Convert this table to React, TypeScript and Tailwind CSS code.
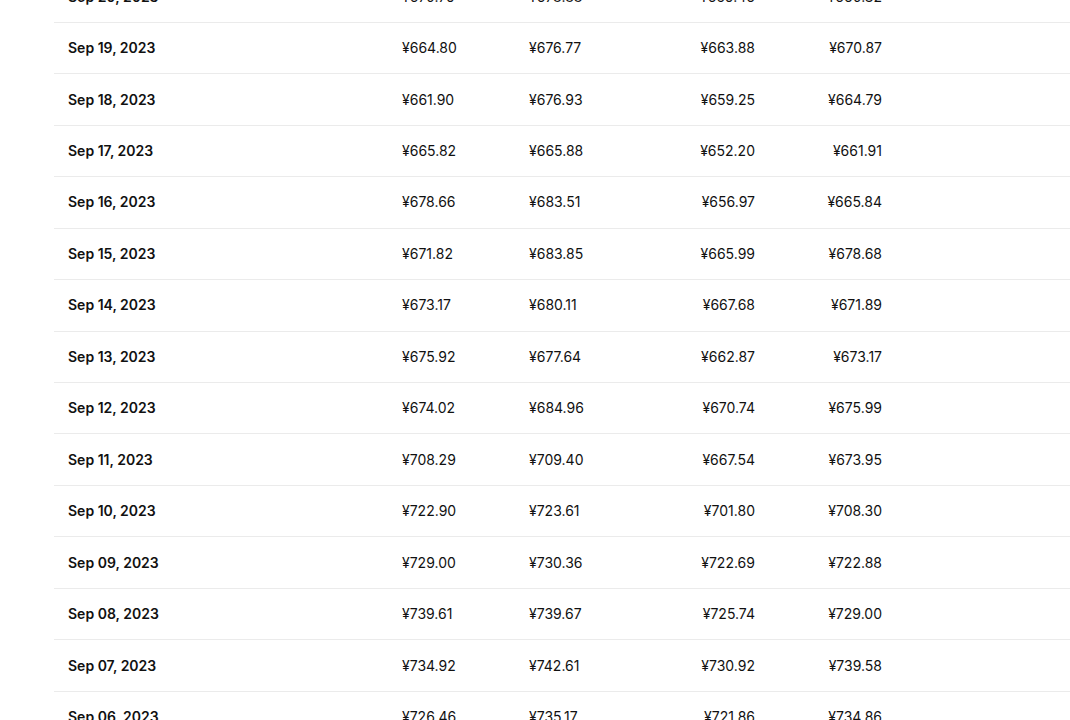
const rows = [
  ["Sep 20, 2023", "¥670.79", "¥678.88", "¥659.46", "¥660.32"],
  ["Sep 19, 2023", "¥664.80", "¥676.77", "¥663.88", "¥670.87"],
  ["Sep 18, 2023", "¥661.90", "¥676.93", "¥659.25", "¥664.79"],
  ["Sep 17, 2023", "¥665.82", "¥665.88", "¥652.20", "¥661.91"],
  ["Sep 16, 2023", "¥678.66", "¥683.51", "¥656.97", "¥665.84"],
  ["Sep 15, 2023", "¥671.82", "¥683.85", "¥665.99", "¥678.68"],
  ["Sep 14, 2023", "¥673.17", "¥680.11", "¥667.68", "¥671.89"],
  ["Sep 13, 2023", "¥675.92", "¥677.64", "¥662.87", "¥673.17"],
  ["Sep 12, 2023", "¥674.02", "¥684.96", "¥670.74", "¥675.99"],
  ["Sep 11, 2023", "¥708.29", "¥709.40", "¥667.54", "¥673.95"],
  ["Sep 10, 2023", "¥722.90", "¥723.61", "¥701.80", "¥708.30"],
  ["Sep 09, 2023", "¥729.00", "¥730.36", "¥722.69", "¥722.88"],
  ["Sep 08, 2023", "¥739.61", "¥739.67", "¥725.74", "¥729.00"],
  ["Sep 07, 2023", "¥734.92", "¥742.61", "¥730.92", "¥739.58"],
  ["Sep 06, 2023", "¥726.46", "¥735.17", "¥721.86", "¥734.86"],
];

export default function App() {
  return (
    <div className="h-[720px] overflow-hidden bg-white font-['Inter',sans-serif] text-sm text-[#111]">
      <div className="-mt-[28.6px] pl-[54px]">
        {rows.map((r) => (
          <div key={r[0]} className="flex h-[51.46px] items-center border-b border-[#ebebeb]">
            <div className="w-[348px] pl-[14px] font-semibold">{r[0]}</div>
            <div className="w-[127px]">{r[1]}</div>
            <div className="w-[106px]">{r[2]}</div>
            <div className="w-[120px] text-right">{r[3]}</div>
            <div className="w-[127px] text-right">{r[4]}</div>
            <div className="flex-1" />
          </div>
        ))}
      </div>
    </div>
  );
}
